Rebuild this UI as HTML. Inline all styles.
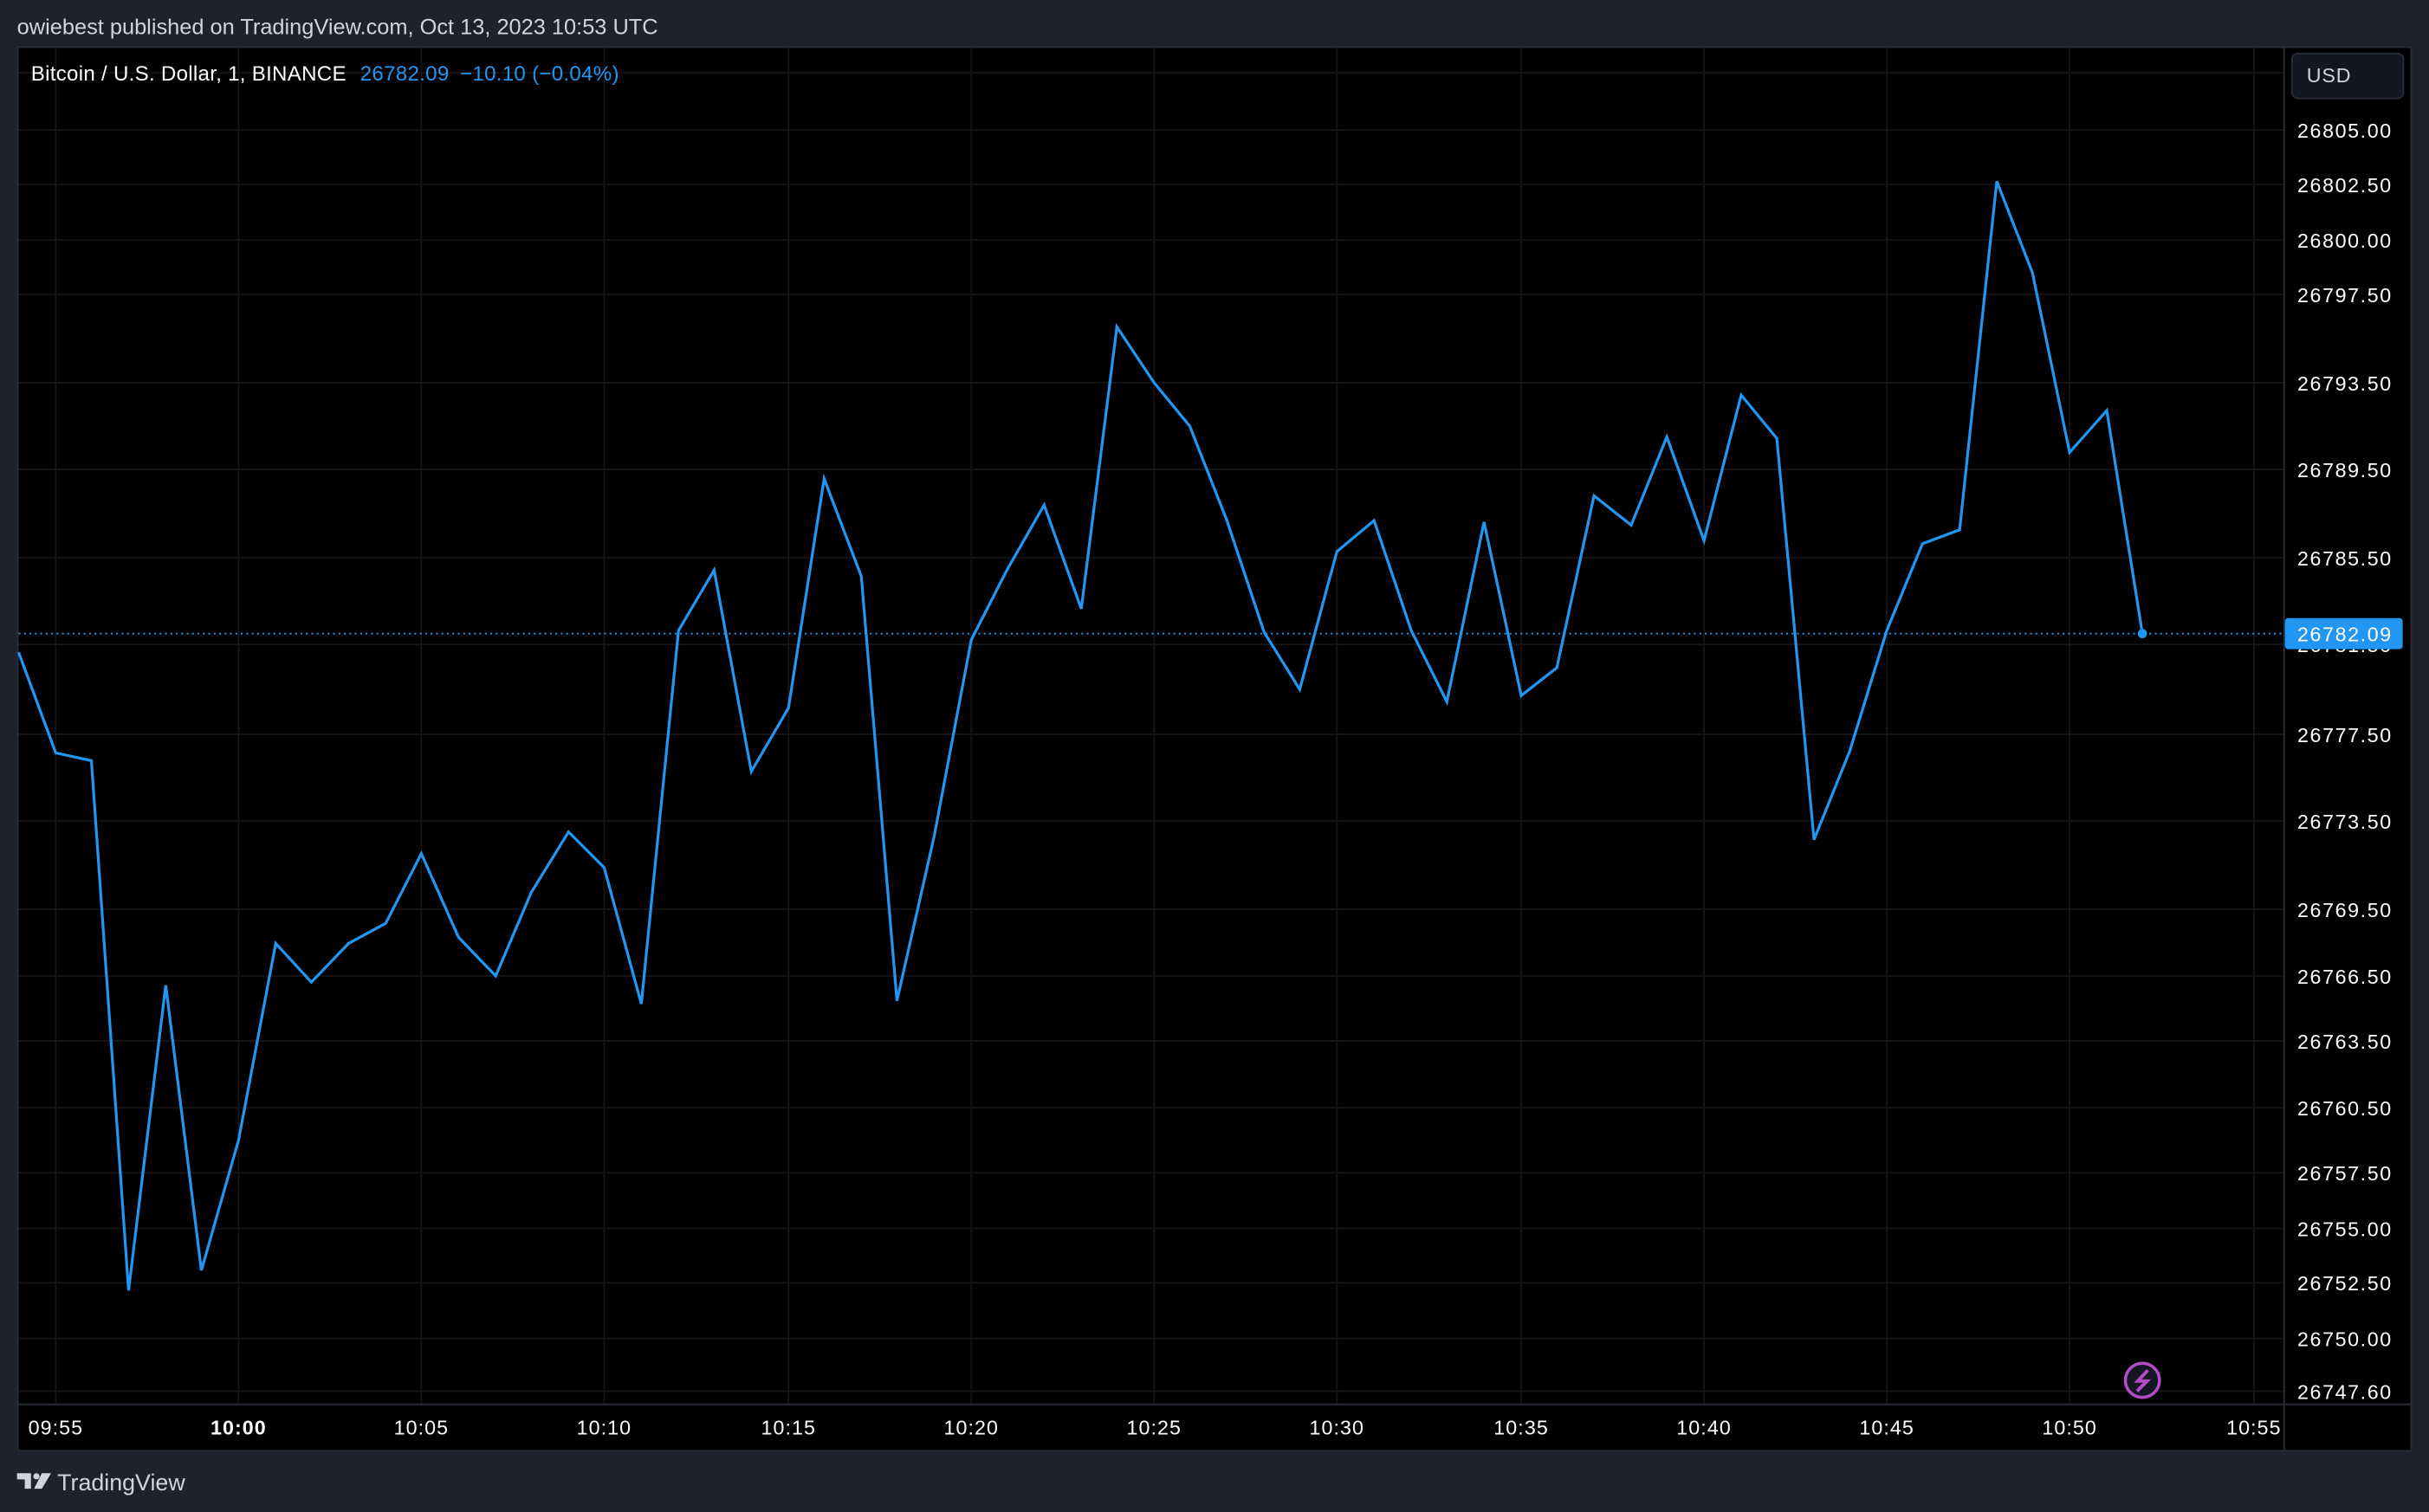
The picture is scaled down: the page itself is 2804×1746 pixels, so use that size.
<!DOCTYPE html>
<html><head><meta charset="utf-8"><style>
html,body{margin:0;padding:0;background:#1e222d;width:2804px;height:1746px;overflow:hidden}
svg{display:block}
text{font-family:"Liberation Sans",sans-serif}
</style></head><body>
<svg width="2804" height="1746" viewBox="0 0 1568 976" preserveAspectRatio="none" xmlns="http://www.w3.org/2000/svg">
<rect width="1568" height="976" fill="#1e222d"/>
<text x="11" y="22" font-size="14.2" fill="#d1d4dc">owiebest published on TradingView.com, Oct 13, 2023 10:53 UTC</text>
<rect x="11.5" y="30.5" width="1545" height="906" fill="#000" stroke="#2a2e39"/>
<g stroke="#161616" stroke-width="1">
<line x1="12" x2="1474" y1="84" y2="84"/><line x1="12" x2="1474" y1="119" y2="119"/><line x1="12" x2="1474" y1="155" y2="155"/><line x1="12" x2="1474" y1="190" y2="190"/><line x1="12" x2="1474" y1="247" y2="247"/><line x1="12" x2="1474" y1="303" y2="303"/><line x1="12" x2="1474" y1="360" y2="360"/><line x1="12" x2="1474" y1="416" y2="416"/><line x1="12" x2="1474" y1="474" y2="474"/><line x1="12" x2="1474" y1="530" y2="530"/><line x1="12" x2="1474" y1="587" y2="587"/><line x1="12" x2="1474" y1="630" y2="630"/><line x1="12" x2="1474" y1="672" y2="672"/><line x1="12" x2="1474" y1="715" y2="715"/><line x1="12" x2="1474" y1="757" y2="757"/><line x1="12" x2="1474" y1="793" y2="793"/><line x1="12" x2="1474" y1="828" y2="828"/><line x1="12" x2="1474" y1="864" y2="864"/><line x1="12" x2="1474" y1="898" y2="898"/><line x1="12" x2="1474" y1="47" y2="47"/>
<line y1="31" y2="906" x1="36" x2="36"/><line y1="31" y2="906" x1="154" x2="154"/><line y1="31" y2="906" x1="272" x2="272"/><line y1="31" y2="906" x1="390" x2="390"/><line y1="31" y2="906" x1="509" x2="509"/><line y1="31" y2="906" x1="627" x2="627"/><line y1="31" y2="906" x1="745" x2="745"/><line y1="31" y2="906" x1="863" x2="863"/><line y1="31" y2="906" x1="982" x2="982"/><line y1="31" y2="906" x1="1100" x2="1100"/><line y1="31" y2="906" x1="1218" x2="1218"/><line y1="31" y2="906" x1="1336" x2="1336"/><line y1="31" y2="906" x1="1455" x2="1455"/>
</g>
<line x1="1474.5" x2="1474.5" y1="31" y2="936" stroke="#2a2e39"/>
<line x1="12" x2="1557" y1="906.5" y2="906.5" stroke="#2a2e39"/>
<text x="20" y="52" font-size="13.5" letter-spacing="0.15" fill="#fff">Bitcoin / U.S. Dollar, 1, BINANCE <tspan fill="#2196f3" dx="5">26782.09</tspan><tspan fill="#2196f3" dx="7">−10.10 (−0.04%)</tspan></text>
<line x1="12" x2="1474" y1="409" y2="409" stroke="#2196f3" stroke-width="1" stroke-dasharray="1.2,2.3"/>
<polyline fill="none" stroke="#2196f3" stroke-width="1.8" stroke-linejoin="miter" points="12,421 36,486 59,491 83,833 107,636 130,820 154,736 178,609 201,634 225,609 249,596 272,551 296,605 320,630 343,576 367,537 390,560 414,648 438,407 461,368 485,498 509,457 532,309 556,372 579,646 603,540 627,413 650,368 674,326 698,393 721,211 745,247 768,275 792,336 816,408 839,445 863,356 887,336 911,407 934,453 958,337 982,449 1005,431 1029,320 1053,339 1076,282 1100,349 1124,255 1147,283 1171,542 1194,485 1218,407 1241,351 1265,342 1289,117 1312,176 1336,292 1360,265 1383,409"/>
<circle cx="1383" cy="409" r="3" fill="#2196f3"/>
<rect x="1479.5" y="34.5" width="72" height="29" rx="4" fill="#131722" stroke="#2a2e39"/>
<text x="1489" y="53" font-size="13" letter-spacing="0.5" fill="#d1d4dc">USD</text>
<g font-size="13" letter-spacing="0.9" fill="#fff">
<text x="1483" y="89">26805.00</text><text x="1483" y="124">26802.50</text><text x="1483" y="160">26800.00</text><text x="1483" y="195">26797.50</text><text x="1483" y="252">26793.50</text><text x="1483" y="308">26789.50</text><text x="1483" y="365">26785.50</text><text x="1483" y="421">26781.50</text><text x="1483" y="479">26777.50</text><text x="1483" y="535">26773.50</text><text x="1483" y="592">26769.50</text><text x="1483" y="635">26766.50</text><text x="1483" y="677">26763.50</text><text x="1483" y="720">26760.50</text><text x="1483" y="762">26757.50</text><text x="1483" y="798">26755.00</text><text x="1483" y="833">26752.50</text><text x="1483" y="869">26750.00</text><text x="1483" y="903">26747.60</text>
</g>
<rect x="1475" y="399" width="76" height="20" rx="2" fill="#2196f3"/>
<text x="1483" y="414" font-size="13" letter-spacing="0.9" fill="#fff">26782.09</text>
<circle cx="1383" cy="891" r="11" fill="#131722" stroke="#b54cc7" stroke-width="2"/>
<polyline points="1386.5,884.5 1380,891.5 1386,891.5 1379.5,898" fill="none" stroke="#b54cc7" stroke-width="2.2" stroke-linejoin="miter"/>
<g font-size="13" letter-spacing="0.6" fill="#fff" text-anchor="middle">
<text x="36" y="926">09:55</text><text x="154" y="926" font-weight="bold">10:00</text><text x="272" y="926">10:05</text><text x="390" y="926">10:10</text><text x="509" y="926">10:15</text><text x="627" y="926">10:20</text><text x="745" y="926">10:25</text><text x="863" y="926">10:30</text><text x="982" y="926">10:35</text><text x="1100" y="926">10:40</text><text x="1218" y="926">10:45</text><text x="1336" y="926">10:50</text><text x="1455" y="926">10:55</text>
</g>
<g fill="#d1d4dc">
<path d="M11,951 h9 v10 h-4 v-6 h-5 z"/>
<circle cx="23.5" cy="953" r="2"/>
<path d="M27,951 h6 l-6 10 h-5 z"/>
</g>
<text x="37" y="962" font-size="15" fill="#d1d4dc">TradingView</text>
</svg>
</body></html>
